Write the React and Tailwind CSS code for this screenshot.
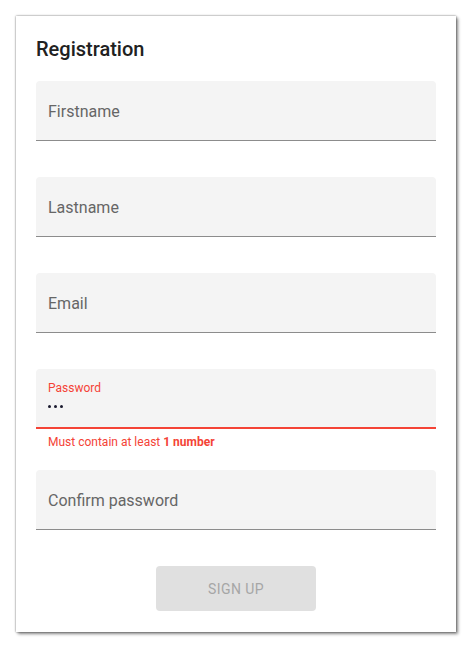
export default function App() {
  const font = { fontFamily: "Roboto, 'Noto Sans', sans-serif" };
  const Field = ({ label }) => (
    <div className="h-[60px] w-full rounded-t-[4px] bg-[#f4f4f4] border-b border-[#8c8c8c] flex items-center pl-[12px] pt-[2px]">
      <span className="text-[16px] text-[#666666] leading-none">{label}</span>
    </div>
  );
  return (
    <div className="min-h-[656px] w-[475px] bg-white" style={font}>
      <div className="absolute left-[16px] top-[16px] w-[440px] h-[616px] bg-white shadow-[0_0_2px_rgba(0,0,0,0.55),2px_2px_3px_rgba(0,0,0,0.45)] px-[20px] pt-[17px] flex flex-col">
        <h1 className="text-[20px] leading-[32px] font-medium text-[#212121] mb-[16px]">Registration</h1>
        <Field label="Firstname" />
        <div className="h-[36px]" />
        <Field label="Lastname" />
        <div className="h-[36px]" />
        <Field label="Email" />
        <div className="h-[36px]" />
        <div className="h-[60px] w-full rounded-t-[4px] bg-[#f4f4f4] border-b-2 border-[#f44336] flex flex-col pl-[12px] pt-[12px]">
          <span className="text-[12px] leading-[14px] text-[#f44336]">Password</span>
          <div className="flex gap-[3px] mt-[10px]">
            <span className="w-[3px] h-[3px] rounded-full bg-[#1a1a2e]" />
            <span className="w-[3px] h-[3px] rounded-full bg-[#1a1a2e]" />
            <span className="w-[3px] h-[3px] rounded-full bg-[#1a1a2e]" />
          </div>
        </div>
        <div className="text-[12px] leading-[18px] text-[#f44336] pl-[12px] mt-[4px]">
          Must contain at least <span className="font-bold">1 number</span>
        </div>
        <div className="h-[19px]" />
        <Field label="Confirm password" />
        <div className="h-[36px]" />
        <div className="flex justify-center">
          <button disabled className="w-[160px] h-[45px] rounded-[4px] bg-[#e0e0e0] text-[14px] font-normal uppercase text-[#a6a6a6] tracking-[0.4px] pt-[1px]">
            Sign up
          </button>
        </div>
      </div>
    </div>
  );
}
